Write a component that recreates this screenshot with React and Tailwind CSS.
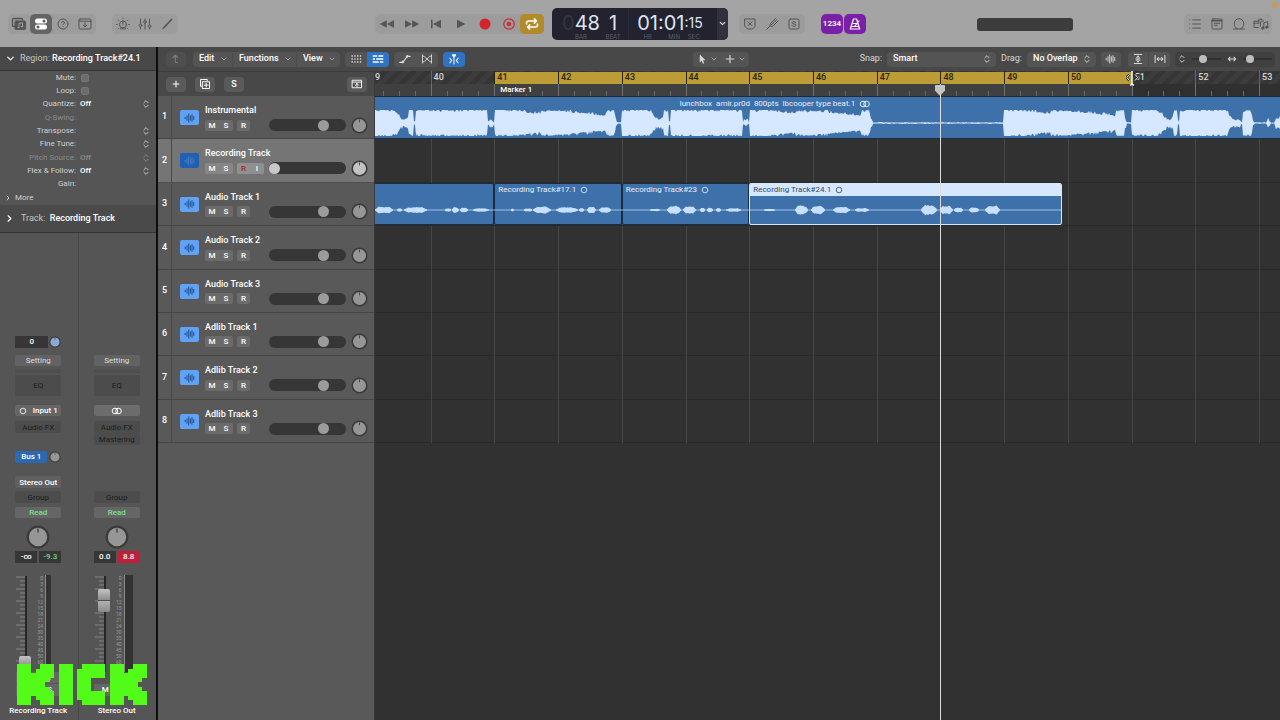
import React, { useState } from 'react';
import clsx from 'clsx';
import {
  ChevronDown,
  ChevronRight,
  ChevronsUpDown,
  CircleHelp,
  List,
  Plus,
} from 'lucide-react';

// Visible part of the arrangement, in bars
const VIEW_START = 39.128;
const VIEW_BARS = 14.2;
const VIEW_UNITS = 905;

const pct = (bar) => `${((bar - VIEW_START) / VIEW_BARS) * 100}%`;
const span = (bars) => `${(bars / VIEW_BARS) * 100}%`;

const TRACKS = [
  { name: 'Instrumental', volume: 74 },
  { name: 'Recording Track', volume: 0, selected: true },
  { name: 'Audio Track 1', volume: 74 },
  { name: 'Audio Track 2', volume: 74 },
  { name: 'Audio Track 3', volume: 74 },
  { name: 'Adlib Track 1', volume: 74 },
  { name: 'Adlib Track 2', volume: 74 },
  { name: 'Adlib Track 3', volume: 74 },
];

const BARS = [40, 41, 42, 43, 44, 45, 46, 47, 48, 49, 50, 51, 52, 53];

// [offset, level] pairs, one unit per pixel of a 905 wide view
const LOOP_A = [
  [0, 1], [26, 1], [30, 0.8], [34, 0.35], [37, 0.25], [40, 0.4], [41, 0.45], [42, 1], [46, 1],
  [46.5, 0.15], [48, 0.15], [48.5, 1], [120, 1], [121, 0.12], [124, 0.28], [127, 0.04], [127.4, 0.04],
];
const LOOP_B = [
  [0, 1], [20, 1], [32, 0.85], [46, 0.75], [47, 0.98], [60, 0.97], [74, 0.88], [88, 0.78], [100, 0.66], [111, 0.58],
  [112, 0.98], [120, 0.98], [121, 0.4], [123, 0.04], [127.4, 0.04],
];
const LOOP_END = [
  [0, 1], [24, 1], [30, 0.7], [34, 0.35], [38, 0.25], [41, 0.45], [42, 0.98], [45, 0.98], [46, 0.1],
  [47.5, 0.1], [48, 1], [95, 1], [98, 0.4], [103, 0.25], [107, 0.3], [110, 0.04], [111, 0.98],
  [119, 0.98], [121, 0.2], [123, 0.04], [134, 0.04], [136, 0.4], [138, 0.06], [142, 0.06], [144, 0.35], [149, 0.45],
];
const shift = (points, by) => points.map(([x, a]) => [x + by, a]);
const BEAT = [
  ...shift(LOOP_A, -8),
  ...shift(LOOP_B, 119.5),
  ...shift(LOOP_A, 247),
  ...shift(LOOP_B, 374.5),
  [503, 0.03], [628, 0.03],
  ...shift(LOOP_B, 629),
  ...shift(LOOP_END, 757),
];

// [start, end, half height]
const VOICE = [
  [0, 18, 3], [22, 27, 1.3], [29, 52, 2.6], [70, 76, 1.2], [77, 84, 2.4], [85, 93, 2], [98, 114, 1.3],
  [136, 139, 1], [149, 157, 1.2], [158, 176, 3], [181, 203, 2.4], [204, 209, 1.6], [212, 221, 2.8], [224, 236, 2.5],
  [275, 285, 0.7], [292, 306, 4], [308, 321, 3.4], [325, 330, 1.8], [332, 338, 1.8], [341, 346, 1.4], [351, 366, 1.3],
  [389, 400, 0.7], [420, 433, 4.2], [436, 450, 3.8], [458, 475, 2.8], [480, 494, 1.5],
  [546, 562, 4.8], [565, 578, 4], [579, 588, 2], [594, 604, 2.2], [610, 625, 4.2],
];

const noise = (n) => {
  const v = Math.sin(n * 127.1) * 43758.5453;
  return v - Math.floor(v);
};

const levelAt = (x) => {
  for (let i = 1; i < BEAT.length; i++) {
    const [x1, a1] = BEAT[i];
    const [x0, a0] = BEAT[i - 1];
    if (x <= x1) return x1 === x0 ? a1 : a0 + ((a1 - a0) * (x - x0)) / (x1 - x0);
  }
  return 0.4;
};

// Loud parts are clipped flat with notches, softer ones get peaks on top
const heightAt = (x, seed) => {
  const level = levelAt(x);
  const n = noise(x + seed);
  if (level < 0.05) return 0.4 + (n > 0.75 ? 0.7 : 0);
  if (level > 0.96) return level * 13 - (n > 0.6 ? (n - 0.6) * 5 : 0);
  return Math.min(13, level * 13 + (n > 0.8 ? 1.8 : 0) - (n < 0.3 ? 0.8 : 0));
};

const beatPath = () => {
  const top = [];
  const bottom = [];
  for (let x = 0; x <= VIEW_UNITS; x++) {
    top.push(`${x},${(13 - heightAt(x, 0)).toFixed(1)}`);
    bottom.unshift(`${x},${(13 + heightAt(x, 999)).toFixed(1)}`);
  }
  return `M${top.join('L')}L${bottom.join('L')}Z`;
};

const voicePath = () =>
  VOICE.map(([from, to, h]) => {
    const top = [];
    const bottom = [];
    for (let x = from; x <= to; x++) {
      const t = (x - from) / (to - from);
      const a = 0.5 + h * Math.min(1, Math.sin(Math.PI * t) * 1.6) * (0.65 + noise(x) * 0.35);
      top.push(`${x},${(6 - a).toFixed(1)}`);
      bottom.unshift(`${x},${(6 + a).toFixed(1)}`);
    }
    return `M${top.join('L')}L${bottom.join('L')}Z`;
  }).join('');

/* ---------- icons ---------- */

const Icon = ({ children, className = 'w-4 h-4', box = 16 }) => (
  <svg
    viewBox={`0 0 ${box} ${box}`}
    className={clsx('shrink-0', className)}
    fill="none"
    stroke="currentColor"
    strokeWidth="1"
    strokeLinecap="round"
    strokeLinejoin="round"
    aria-hidden="true"
  >
    {children}
  </svg>
);

const LibraryIcon = () => (
  <Icon>
    <path d="M3.5 10.5h-1a1 1 0 0 1-1-1v-6a1 1 0 0 1 1-1h8a1 1 0 0 1 1 1v.5" strokeWidth="1.300" />
    <rect x="4" y="5" width="10.500" height="8.500" rx="1" fill="currentColor" />
    <path d="M8 11.500V7.500l3.500-.8v4" stroke="#a0a0a0" />
    <circle cx="7.300" cy="11.500" r=".8" fill="#a0a0a0" stroke="none" />
    <circle cx="10.800" cy="10.800" r=".8" fill="#a0a0a0" stroke="none" />
  </Icon>
);

const TogglesIcon = () => (
  <Icon>
    <rect x="2" y="2.500" width="12" height="5" rx="2.500" fill="currentColor" stroke="none" />
    <rect x="2" y="8.500" width="12" height="5" rx="2.500" fill="currentColor" stroke="none" />
    <circle cx="11" cy="5" r="1.500" fill="#5c5c5c" stroke="none" />
    <circle cx="5" cy="11" r="1.500" fill="#5c5c5c" stroke="none" />
  </Icon>
);

const TrayIcon = () => (
  <Icon>
    <rect x="2" y="3" width="12" height="10" rx="1" />
    <path d="M2 5.200h12M8 6.800v4M6.300 9.300 8 11l1.700-1.700" />
  </Icon>
);

const SmartIcon = () => (
  <Icon>
    <circle cx="8" cy="8.500" r="3.500" />
    <path d="M8 8.500V5M3 13l.6-.6M13 13l-.6-.6M1.500 8.500h.8M13.700 8.500h.8M3.300 4l.6.6M12.700 4l-.6.6M8 2v.5M5.500 12.800h5" />
  </Icon>
);

const MixerIcon = () => (
  <Icon>
    <path d="M3.500 3v4.500M3.500 11v2M8 3v1.500M8 7.500V13M12.500 3v5.500M12.500 12v1" />
    <circle cx="3.500" cy="9.300" r="1.300" />
    <circle cx="8" cy="6" r="1.300" />
    <circle cx="12.500" cy="10.300" r="1.300" />
  </Icon>
);

const PencilIcon = () => (
  <Icon>
    <path d="m5 11.500 7.500-8" strokeWidth="1.800" />
    <path d="m3.500 13 1.500-1.500" />
  </Icon>
);

const RewindIcon = () => (
  <Icon>
    <path d="M7.800 4.200v7.600L.8 8zM15 4.200v7.600L8 8z" fill="currentColor" stroke="none" />
  </Icon>
);
const ForwardIcon = () => (
  <Icon>
    <path d="M1 4.200v7.600L8 8zM8.200 4.200v7.600l7-3.800z" fill="currentColor" stroke="none" />
  </Icon>
);
const StartIcon = () => (
  <Icon>
    <path d="M3 3.800h1.600v8.400H3zM13 3.800v8.400L5 8z" fill="currentColor" stroke="none" />
  </Icon>
);
const PlayIcon = () => (
  <Icon>
    <path d="M4 3.800v8.400L12.500 8z" fill="currentColor" stroke="none" />
  </Icon>
);
const RecordIcon = () => (
  <Icon>
    <circle cx="8" cy="8" r="5.500" fill="#d3242c" stroke="none" />
  </Icon>
);
const CaptureIcon = () => (
  <Icon>
    <circle cx="8" cy="8" r="5.200" stroke="#c5303a" strokeWidth="1.300" strokeDasharray="6 1" />
    <circle cx="8" cy="8" r="2.300" fill="#c5303a" stroke="none" />
  </Icon>
);
const CycleIcon = () => (
  <Icon>
    <path d="M2.500 8V7a2 2 0 0 1 2-2H12M10.300 2.800 12.500 5l-2.200 2.200M13.500 8v1a2 2 0 0 1-2 2H4M5.700 8.800 3.500 11l2.200 2.200" strokeWidth="1.600" />
  </Icon>
);

const ReplaceIcon = () => (
  <Icon>
    <path d="M3 3h10v7.500l-2.500 2.500h-5L3 10.500zM6 5.800l4 4M10 5.800l-4 4" />
  </Icon>
);
const ForkIcon = () => (
  <Icon>
    <path d="m2.500 13.500 4-4M11.500 2.500 7 7c-.8.800-1.500 2-.5 3s2.200.3 3-.5l4.500-4.500M6.500 9.500 12.800 3.700" />
  </Icon>
);
const SoloIcon = () => (
  <Icon>
    <rect x="3" y="3" width="10" height="10" rx="1.500" />
    <path d="M9.800 6.500c-.4-1-3.600-1.100-3.600.3s3.600.9 3.600 2.400-3.300 1.400-3.800.3" />
  </Icon>
);
const MetronomeIcon = () => (
  <Icon>
    <path d="M6.500 3h3l3.200 10H3.300zM4.300 10.500h7.400M8 10l4-5M6.500 7.500h3" strokeWidth="1.200" />
  </Icon>
);
const ListIcon = () => <List className="w-[14px] h-[14px] shrink-0" strokeWidth={1.7} />;
const NotesIcon = () => (
  <Icon>
    <rect x="3" y="3" width="10" height="10" rx="1" />
    <path d="M3 4.700h10" strokeWidth="1.500" />
    <path d="M5.500 7.300h5M5.500 9.300h3" />
  </Icon>
);
const LoopIcon = () => (
  <Icon>
    <path d="M2.500 13h11M6.500 12.800c-2-.7-3.300-2.600-3.300-5C3.200 4.800 5.300 2.700 8 2.700s4.800 2.100 4.800 5.100c0 2.400-1.300 4.300-3.300 5" />
  </Icon>
);
const MediaIcon = () => (
  <Icon>
    <path d="M9 4V3.200H5.800v2H1v6.300h4.500M1 7.200h5M7.500 10.500V6l1-1h2M10.800 12V6.700l4-1V11M5.800 5.200v2" />
    <circle cx="9.700" cy="12.200" r="1.100" fill="currentColor" />
    <circle cx="13.700" cy="11.200" r="1.100" fill="currentColor" />
  </Icon>
);

const WaveIcon = ({ className }) => (
  <Icon className={className}>
    <path d="M1.500 7v2M4 5v6M6.300 2.500v11M8.500 5v6M10.700 3.500v9M13 6v4" strokeWidth="1.300" />
  </Icon>
);

const GridIcon = () => (
  <Icon className="w-3 h-3">
    <path d="M2 4h13M2 8h13M2 12h13" strokeWidth="1.800" strokeDasharray="1.800 1.900" strokeLinecap="butt" />
  </Icon>
);
const RegionsIcon = () => (
  <Icon className="w-3 h-3">
    <path d="M1 4h6M8.500 4H15M1 8h3M5.500 8H15M1 12h8M10.500 12H15" strokeWidth="2" strokeLinecap="butt" />
  </Icon>
);
const CurveIcon = () => (
  <Icon className="w-3 h-3">
    <path d="M1 12.500h4l6-8h4" strokeWidth="1.400" />
    <circle cx="5" cy="12" r="1.300" fill="currentColor" />
    <circle cx="11" cy="4.500" r="1.300" fill="currentColor" />
  </Icon>
);
const FlexIcon = () => (
  <Icon className="w-3 h-3">
    <path d="M2 2.500v11M14 2.500v11M2 3.500c5 1 7 8 12 9M2 12.500c5-1 7-8 12-9" strokeWidth="1.200" />
  </Icon>
);
const CatchIcon = () => (
  <Icon className="w-3 h-3">
    <path d="M8 4v10.500" strokeWidth="1.300" />
    <path d="M5.500 1.500h5V4L8 6 5.500 4z" fill="currentColor" stroke="none" />
    <path d="m2.500 7 2.500 3-2.500 3M13.500 7 11 10l2.500 3" strokeWidth="1.400" />
  </Icon>
);
const PointerIcon = () => (
  <Icon className="w-3 h-3">
    <path d="M5 2v10.500l2.500-2.200 1.700 4 1.800-.8-1.700-3.800h3.400z" fill="currentColor" stroke="none" />
  </Icon>
);
const CrossIcon = () => (
  <Icon className="w-3 h-3">
    <path d="M8 3v3.500M8 9.500V13M3 8h3.500M9.500 8H13M7 8h2" strokeWidth="1.600" />
  </Icon>
);
const VZoomIcon = () => (
  <Icon className="w-3 h-3">
    <path d="M3 2h10M3 14h10M8 4v8M6 6l2-2 2 2M6 10l2 2 2-2M5 8h6" strokeWidth="1.300" />
  </Icon>
);
const HZoomIcon = () => (
  <Icon className="w-3 h-3">
    <path d="M1.500 3.500v9M14.500 3.500v9M4 8h8M6 6 4 8l2 2M10 6l2 2-2 2" strokeWidth="1.400" />
  </Icon>
);
const SidewaysIcon = () => (
  <Icon className="w-3 h-3">
    <path d="M3 8h10M5.500 5.500 3 8l2.500 2.500M10.500 5.500 13 8l-2.500 2.500" strokeWidth="1.400" />
  </Icon>
);
const StereoIcon = ({ className = 'w-3 h-2' }) => (
  <svg viewBox="0 0 12 8" className={clsx('shrink-0', className)} fill="none" stroke="currentColor" aria-hidden="true">
    <circle cx="4" cy="4" r="2.800" />
    <circle cx="7.500" cy="4" r="2.800" />
  </svg>
);
const MonoIcon = () => (
  <svg viewBox="0 0 8 8" className="w-2 h-2 shrink-0" fill="none" stroke="currentColor" strokeWidth=".8" aria-hidden="true">
    <circle cx="4" cy="4" r="2.800" />
  </svg>
);

/* ---------- shared pieces ---------- */

const BarButton = ({ label, className = 'w-[22px]', children }) => (
  <button aria-label={label} className={clsx('h-5 rounded-[5px] grid place-items-center', className)}>
    {children}
  </button>
);

const ToolButton = ({ label, className, children }) => (
  <button aria-label={label} className={clsx('h-[15px] grid place-items-center', className)}>
    {children}
  </button>
);

const Knob = ({ size = 'w-[17px] h-[17px]', face = '#969696', ring = '#3a3a3a' }) => (
  <svg viewBox="0 0 24 24" className={clsx('shrink-0', size)} aria-hidden="true">
    <circle cx="12" cy="12" r="10.300" fill={face} stroke={ring} strokeWidth="2.200" />
    <path d="M12 3.500v4" stroke="#444" strokeWidth="1.500" />
  </svg>
);

/* ---------- control bar ---------- */

const Readout = ({ label, small, className, children }) => (
  <div className={clsx('flex flex-col items-center', className)}>
    <span className={clsx('pt-[3px] h-[26px] leading-[24px]', small ? 'text-sm' : 'text-xl')}>{children}</span>
    <span className="text-[6px] leading-[6px] text-[#5c5e6b]">{label}</span>
  </div>
);

const ControlBar = () => (
  <header className="relative h-[47px] bg-[#a4a4a4] grid grid-cols-[1fr_auto_1fr] items-center gap-2 text-[#555]">
    <div className="flex items-center justify-between pl-2">
      <div className="flex items-center gap-4">
        <div className="flex rounded-[5px] bg-[#9c9c9c]">
          <BarButton label="Library"><LibraryIcon /></BarButton>
          <BarButton label="Inspector" className="w-[22px] bg-[#646464] text-white"><TogglesIcon /></BarButton>
          <BarButton label="Quick Help">
            <CircleHelp className="w-3 h-3" strokeWidth={2} />
          </BarButton>
          <BarButton label="Toolbar"><TrayIcon /></BarButton>
        </div>
        <div className="flex rounded-[5px] bg-[#9c9c9c]">
          <BarButton label="Smart Controls"><SmartIcon /></BarButton>
          <BarButton label="Mixer"><MixerIcon /></BarButton>
          <BarButton label="Editors"><PencilIcon /></BarButton>
        </div>
      </div>
      <div className="flex rounded-[5px] bg-[#9c9c9c]">
        <BarButton label="Rewind" className="w-[24px]"><RewindIcon /></BarButton>
        <BarButton label="Forward" className="w-[25px]"><ForwardIcon /></BarButton>
        <BarButton label="Go to Beginning" className="w-6"><StartIcon /></BarButton>
        <BarButton label="Play" className="w-[25px]"><PlayIcon /></BarButton>
        <BarButton label="Record" className="w-6"><RecordIcon /></BarButton>
        <BarButton label="Capture Recording" className="w-[23px]"><CaptureIcon /></BarButton>
        <BarButton label="Cycle" className="w-6 bg-[#b28a27] text-white"><CycleIcon /></BarButton>
      </div>
    </div>

    <div className="flex h-8 rounded-[5px] bg-[#22232f] font-['Inter',sans-serif] text-[#dfe4f2] text-center overflow-hidden">
      <div className="w-[77px] flex border-r border-[#2b2c39] pl-[11px] gap-2">
        <Readout label="BAR" className="w-9">
          <span className="text-[#34353f]">0</span>48
        </Readout>
        <Readout label="BEAT" className="w-3">1</Readout>
      </div>
      <div className="w-[88px] flex justify-center pr-1.5">
        <Readout label="HR">01</Readout>
        <span className="text-xl leading-[28px]">:</span>
        <Readout label="MIN">01</Readout>
        <Readout label="SEC" small>:15</Readout>
      </div>
      <button aria-label="Display Mode" className="w-[11px] bg-[#30313d] grid place-items-center">
        <ChevronDown className="w-[9px] h-[9px]" strokeWidth={3} />
      </button>
    </div>

    <div className="flex items-center justify-between pl-[3px] pr-2">
      <div className="flex gap-4">
        <div className="flex rounded-[5px] bg-[#9c9c9c]">
          <BarButton label="Replace"><ReplaceIcon /></BarButton>
          <BarButton label="Tuner"><ForkIcon /></BarButton>
          <BarButton label="Solo"><SoloIcon /></BarButton>
        </div>
        <div className="flex gap-px text-white">
          <BarButton label="Count In" className="w-[22px] bg-[#7a20a8]">
            <span className="text-[8px] font-semibold">1234</span>
          </BarButton>
          <BarButton label="Metronome" className="w-[22px] bg-[#7a20a8]"><MetronomeIcon /></BarButton>
        </div>
      </div>
      <div className="w-24 h-[13px] mt-0.5 rounded-[3px] bg-[#3c3c3c]" />
      <div className="flex rounded-[5px] bg-[#9c9c9c]">
        <BarButton label="List Editors"><ListIcon /></BarButton>
        <BarButton label="Note Pads"><NotesIcon /></BarButton>
        <BarButton label="Loop Browser"><LoopIcon /></BarButton>
        <BarButton label="Media Browser"><MediaIcon /></BarButton>
      </div>
    </div>
    <span className="absolute right-0.5 top-0.5 w-1.5 h-1.5 rounded-full bg-[#c99a5c]" />
  </header>
);

/* ---------- inspector ---------- */

const FIELDS = [
  { label: 'Mute', check: true },
  { label: 'Loop', check: true },
  { label: 'Quantize', value: 'Off' },
  { label: 'Q-Swing', disabled: true, bare: true },
  { label: 'Transpose', value: '' },
  { label: 'Fine Tune', value: '' },
  { label: 'Pitch Source', value: 'Off', disabled: true },
  { label: 'Flex & Follow', value: 'Off' },
  { label: 'Gain', bare: true },
];

const RegionField = ({ field }) => {
  const id = `region-${field.label.replace(/\W+/g, '-').toLowerCase()}`;
  return (
    <div className={clsx('flex items-center text-[8px] leading-3', field.disabled ? 'text-[#8a8a8a]' : 'text-[#cfcfcf]')}>
      <label htmlFor={id} className="w-[76px] text-right">{field.label}:</label>
      {field.check && (
        <input id={id} type="checkbox" className="ml-[5px] w-2 h-2 appearance-none rounded-xs bg-[#6c6c6c] border border-[#757575]" />
      )}
      {field.bare && <input id={id} className="ml-1 w-16 h-3 bg-transparent" disabled={field.disabled} />}
      {!field.check && !field.bare && (
        <>
          <select
            id={id}
            disabled={field.disabled}
            className={clsx('ml-1 flex-1 appearance-none bg-transparent font-medium', !field.disabled && 'text-white')}
          >
            <option>{field.value}</option>
          </select>
          <ChevronsUpDown className="w-[10px] h-[10px] mr-[5px]" strokeWidth={2.2} />
        </>
      )}
    </div>
  );
};

const Slot = ({ className, children }) => (
  <button className={clsx('block w-[46px] mx-auto rounded-xs text-[8px] leading-[11px]', className)}>{children}</button>
);

const SCALE = ['0', '3', '6', '9', '12', '15', '18', '21', '24', '30', '35', '40', '45', '50', '60'];

const Fader = ({ name, value, wide }) => (
  <div className="flex pl-[15px] gap-[3px] h-[97px] overflow-hidden">
    <div className="grid">
      <svg className="col-start-1 row-start-1 w-4 h-[97px]" viewBox="0 0 16 97" aria-hidden="true">
        <path d="M11 1v96" stroke="#262626" strokeWidth="2" />
        {Array.from({ length: 25 }, (_, i) => (
          <path key={i} d={`M${i % 3 ? 5 : 1} ${2 + i * 4}H10`} stroke="#9c9c9c" strokeWidth=".7" />
        ))}
      </svg>
      <input
        type="range"
        aria-label={`${name} volume`}
        defaultValue={value}
        className="col-start-1 row-start-1 justify-self-end w-3 h-[104px] appearance-none bg-transparent [writing-mode:vertical-lr] [direction:rtl] [&::-webkit-slider-thumb]:appearance-none [&::-webkit-slider-thumb]:w-3 [&::-webkit-slider-thumb]:h-[23px] [&::-webkit-slider-thumb]:rounded-xs [&::-webkit-slider-thumb]:bg-[linear-gradient(#c4c4c4,#8e8e8e_46%,#505050_48%,#505050_52%,#b0b0b0_54%,#8a8a8a)]"
      />
    </div>
    <div className="flex">
      <div className="w-[9px] text-[5px] leading-[6px] text-right text-[#9a9a9a]">
        {SCALE.map((n) => <div key={n}>{n}</div>)}
      </div>
      <div className={clsx('ml-0.5 h-[97px] bg-[#333] border-l border-[#8a8a8a]', wide ? 'w-[9px]' : 'w-[6px]')} />
    </div>
  </div>
);

const ChannelStrip = ({ strip }) => (
  <div className="flex-1 min-w-0 grid content-end grid-rows-[19px_14px_36px_16px_30px_25px_15px_16px_18px_26px_24px_97px_12px_19px_16px] pr-px pb-px">
    <div>
      {strip.input && (
        <div className="w-[46px] mx-auto flex items-center gap-[1px]">
          <span className="w-[33px] h-3 bg-[#363636] text-white font-medium text-[8px] leading-3 text-center">0</span>
          <Knob size="w-3 h-3" face="#8fa8d0" />
        </div>
      )}
    </div>
    <Slot className="h-[11px] bg-[#626262] text-[#dedede]">Setting</Slot>
    <div>
      <div className="w-[46px] mx-auto h-1 bg-[#4f4f4f]" />
      <Slot className="h-[21px] mt-0.5 bg-[#4c4c4c] text-[#1c1c1c]">EQ</Slot>
    </div>
    {strip.input ? (
      <Slot className="h-[11px] bg-[#666] text-white font-medium">
        <span className="flex items-center justify-center gap-1.5"><MonoIcon />{strip.input}</span>
      </Slot>
    ) : (
      <Slot className="h-[11px] bg-[#6c6c6c] text-white">
        <StereoIcon className="w-3 h-2 mx-auto" />
      </Slot>
    )}
    <div>
      <Slot className="h-3 bg-[#4c4c4c] text-[#1c1c1c]">Audio FX</Slot>
      {strip.fx && <Slot className="h-3 bg-[#4c4c4c] text-[#1c1c1c]">{strip.fx}</Slot>}
    </div>
    <div>
      {strip.bus && (
        <div className="w-[46px] mx-auto flex items-center gap-0.5">
          <button className="w-8 h-3 rounded-xs bg-[#2c69b4] text-white font-medium text-[8px] leading-3">{strip.bus}</button>
          <Knob size="w-3 h-3" />
        </div>
      )}
    </div>
    {strip.output ? (
      <Slot className="h-3 bg-[#606060] text-white font-medium whitespace-nowrap">{strip.output}</Slot>
    ) : <div />}
    <Slot className="h-3 bg-[#4c4c4c] text-[#1c1c1c]">Group</Slot>
    <Slot className="h-[11px] bg-[#666] text-[#7be08f] font-medium">Read</Slot>
    <Knob size="w-6 h-6 mx-auto" />
    <div className="flex justify-center gap-0.5 text-[8px] leading-3 font-medium text-center">
      <output className="w-[22px] h-3 bg-[#363636] text-white">{strip.volume}</output>
      <output className={clsx('w-[22px] h-3', strip.clip ? 'bg-[#c01f3a] text-white' : 'bg-[#363636] text-[#6fd88a]')}>{strip.peak}</output>
    </div>
    <Fader name={strip.name} value={strip.fader} wide={strip.clip} />
    <div className="flex justify-center gap-px text-[8px] leading-[11px] text-white">
      {strip.input && (
        <>
          <button className="w-[22px] h-[11px] bg-[#666]">R</button>
          <button className="w-[22px] h-[11px] bg-[#666]">I</button>
        </>
      )}
    </div>
    <div className="flex justify-center gap-px text-[8px] leading-3 text-white">
      <button className="w-[22px] h-3 bg-[#666] font-medium">M</button>
      {strip.input ? <button className="w-[22px] h-3 bg-[#666] font-medium">S</button> : <span className="w-[22px]" />}
    </div>
    <div className="text-[8px] leading-4 font-medium text-white text-center whitespace-nowrap">{strip.name}</div>
  </div>
);

const STRIPS = [
  { name: 'Recording Track', input: 'Input 1', bus: 'Bus 1', output: 'Stereo Out', volume: '-∞', peak: '-9.3', fader: 0 },
  { name: 'Stereo Out', fx: 'Mastering', volume: '0.0', peak: '8.8', clip: true, fader: 83 },
];

const Inspector = () => (
  <aside className="w-[158px] shrink-0 bg-[#555] border-r-2 border-[#0d0d0d] flex flex-col">
    <h2 className="h-6 bg-[#484848] border-b border-[#333] flex items-center gap-1 pl-[5px] text-[9px] text-[#c4c4c4]">
      <ChevronDown className="w-[11px] h-[11px] text-white" strokeWidth={2.5} />
      <span>Region: <span className="text-white font-medium">Recording Track#24.1</span></span>
    </h2>
    <div className="grid grid-rows-9 h-[120px]">
      {FIELDS.map((field) => <RegionField key={field.label} field={field} />)}
    </div>
    <button className="h-[14px] flex items-center gap-[3px] pl-1 text-[8px] text-[#cfcfcf]">
      <ChevronRight className="w-2 h-2" strokeWidth={3} />
      More
    </button>
    <h2 className="h-7 bg-[#4a4a4a] border-b border-[#333] flex items-center gap-1.5 pl-1 text-[9px] text-[#c4c4c4]">
      <ChevronRight className="w-[11px] h-[11px] text-white" strokeWidth={2.5} />
      <span>Track:&nbsp; <span className="text-white font-medium">Recording Track</span></span>
    </h2>
    <div className="flex-1 flex divide-x divide-[#484848]">
      {STRIPS.map((strip) => <ChannelStrip key={strip.name} strip={strip} />)}
    </div>
  </aside>
);

/* ---------- tracks area ---------- */

const Menu = ({ children, className }) => (
  <button className={clsx('h-[15px] flex items-center justify-between pl-1.5 pr-1 text-[9px] font-medium text-white', className)}>
    {children}
    <ChevronDown className="w-2 h-2 text-[#a0a0a0]" strokeWidth={3} />
  </button>
);

const ZoomSlider = ({ label, value }) => (
  <input
    type="range"
    aria-label={label}
    defaultValue={value}
    className="w-[29px] h-2 appearance-none bg-[linear-gradient(#303030,#303030)] bg-[length:100%_2px] bg-center bg-no-repeat [&::-webkit-slider-thumb]:appearance-none [&::-webkit-slider-thumb]:w-2 [&::-webkit-slider-thumb]:h-2 [&::-webkit-slider-thumb]:rounded-full [&::-webkit-slider-thumb]:bg-[#bdbdbd]"
  />
);

const TracksToolbar = () => (
  <div className="h-6 bg-[#484848] grid grid-cols-[1fr_auto_1fr] items-center pl-2 pr-[5px] text-[#d8d8d8]">
    <div className="flex items-center gap-[5px]">
      <ToolButton label="Up" className="w-5 mr-0.5 rounded-sm bg-[#4f4f4f] text-[#7d7d7d]">
        <Icon className="w-3 h-3"><path d="M4 6l3-3 3 3M7 3v8c0 1.500 1 2 3 2" strokeWidth="1.500" /></Icon>
      </ToolButton>
      <div className="flex rounded-sm bg-[#545454] divide-x divide-[#4b4b4b]">
        <Menu className="w-10">Edit</Menu>
        <Menu className="w-16">Functions</Menu>
        <Menu className="w-[43px]">View</Menu>
      </div>
      <div className="flex rounded-sm bg-[#545454] overflow-hidden">
        <ToolButton label="Live Loops" className="w-[22px]"><GridIcon /></ToolButton>
        <ToolButton label="Tracks View" className="w-[22px] bg-[#2f74c4] text-white"><RegionsIcon /></ToolButton>
      </div>
      <div className="flex rounded-sm bg-[#545454]">
        <ToolButton label="Automation" className="w-[22px]"><CurveIcon /></ToolButton>
        <ToolButton label="Flex" className="w-[22px]"><FlexIcon /></ToolButton>
      </div>
      <ToolButton label="Catch" className="w-[22px] rounded-sm bg-[#2f74c4] text-white"><CatchIcon /></ToolButton>
    </div>

    <div className="flex rounded-sm bg-[#545454]">
      <button aria-label="Left-click Tool" className="w-7 h-[15px] flex items-center justify-center gap-0.5">
        <PointerIcon />
        <ChevronDown className="w-2 h-2 text-[#a0a0a0]" strokeWidth={3} />
      </button>
      <button aria-label="Command-click Tool" className="w-7 h-[15px] flex items-center justify-center gap-0.5">
        <CrossIcon />
        <ChevronDown className="w-2 h-2 text-[#a0a0a0]" strokeWidth={3} />
      </button>
    </div>

    <div className="flex items-center justify-end gap-[5px] text-[9px]">
      <label htmlFor="snap">Snap:</label>
      <div className="flex items-center w-[109px] rounded-sm bg-[#545454] pr-1">
        <select id="snap" className="h-[15px] flex-1 appearance-none bg-transparent pl-1.5 font-medium text-white">
          <option>Smart</option>
        </select>
        <ChevronsUpDown className="w-[10px] h-[10px]" strokeWidth={2.2} />
      </div>
      <label htmlFor="drag">Drag:</label>
      <div className="flex items-center w-[69px] rounded-sm bg-[#545454] pr-1">
        <select id="drag" className="h-[15px] min-w-0 flex-1 appearance-none bg-transparent pl-1.5 font-medium text-white">
          <option>No Overlap</option>
        </select>
        <ChevronsUpDown className="w-[10px] h-[10px]" strokeWidth={2.2} />
      </div>
      <ToolButton label="Waveform Zoom" className="w-5 rounded-sm bg-[#545454]"><WaveIcon className="w-3 h-3" /></ToolButton>
      <div className="flex ml-0.5 rounded-sm bg-[#545454] divide-x divide-[#4a4a4a]">
        <ToolButton label="Zoom Vertically" className="w-[21px]"><VZoomIcon /></ToolButton>
        <ToolButton label="Zoom Horizontally" className="w-[21px]"><HZoomIcon /></ToolButton>
      </div>
      <div className="h-[15px] flex items-center gap-[5px] rounded-sm bg-[#404040] pl-0.5 pr-[3px]">
        <ChevronsUpDown className="w-[10px] h-[10px]" strokeWidth={2.2} />
        <ZoomSlider label="Vertical Zoom" value={34} />
        <SidewaysIcon />
        <ZoomSlider label="Horizontal Zoom" value={14} />
      </div>
    </div>
  </div>
);

const TrackHeader = ({ track, index }) => (
  <li className={clsx('flex border-b text-white', track.selected ? 'bg-[#757575] border-[#505050]' : 'bg-[#595959] border-[#464646]')}>
    <span className="w-[14px] border-r border-[#4a4a4a] grid place-items-center text-[9px] font-medium">{index + 1}</span>
    <span
      className={clsx(
        'ml-2 mt-[14px] w-[19px] h-[15px] rounded-xs grid place-items-center shrink-0',
        track.selected ? 'bg-[#1f5fb4] text-[#4a7db8]' : 'bg-[#62a2f5] text-[#1d4b8c]'
      )}
    >
      <WaveIcon className="w-3 h-3" />
    </span>
    <div className="ml-1.5 flex-1 pt-2">
      <div className="text-[9px] leading-3 font-medium">{track.name}</div>
      <div className="flex items-center pt-[3px]">
        <div className="w-[64px] flex gap-1 text-[8px] leading-[11px] font-medium">
          <div className={clsx('flex rounded-xs', track.selected ? 'bg-[#868686]' : 'bg-[#6b6b6b]')}>
            <button className="w-[14px]" aria-label={`Mute ${track.name}`}>M</button>
            <button className="w-[14px]" aria-label={`Solo ${track.name}`}>S</button>
          </div>
          <div className={clsx('flex rounded-xs', track.selected ? 'bg-[#909090]' : 'bg-[#6b6b6b]')}>
            <button className={clsx('w-[13px]', track.selected && 'text-[#b3202c]')} aria-label={`Record ${track.name}`}>R</button>
            {track.selected && <button className="w-[14px]" aria-label={`Monitor ${track.name}`}>I</button>}
          </div>
        </div>
        <input
          type="range"
          aria-label={`${track.name} volume`}
          defaultValue={track.volume}
          className={clsx(
            'w-[77px] h-3 appearance-none rounded-full bg-[#363636] [&::-webkit-slider-thumb]:appearance-none [&::-webkit-slider-thumb]:w-[11px] [&::-webkit-slider-thumb]:h-[11px] [&::-webkit-slider-thumb]:rounded-full',
            track.selected ? '[&::-webkit-slider-thumb]:bg-[#c8c8c8]' : '[&::-webkit-slider-thumb]:bg-[#9b9b9b]'
          )}
        />
        <span className="ml-[5px] -my-1"><Knob face={track.selected ? '#c2c2c2' : '#969696'} /></span>
      </div>
    </div>
  </li>
);

const Ruler = () => (
  <div className="relative h-[25px] overflow-hidden bg-[#404040] text-[9px] leading-[13px] font-medium text-[#d6d6d6]">
    <div className="h-[13px] bg-[repeating-linear-gradient(135deg,#3c3c3c_0px,#3c3c3c_5px,#353535_5px,#353535_10px)]" />
    <div className="absolute top-px h-3 bg-[#bb9c35]" style={{ left: pct(41), width: span(10) }} />
    <div className="absolute top-[13px] bottom-0 right-0 bg-[#303030]" style={{ left: pct(51) }} />
    <span className="absolute left-0 top-0">9</span>
    {BARS.map((bar) => {
      const inCycle = bar > 40 && bar < 51;
      return (
        <React.Fragment key={bar}>
          <span
            className={clsx('absolute top-0 h-[13px] border-l pl-0.5', inCycle ? 'border-[#2b2410] text-[#2b2410]' : 'border-[#666]')}
            style={{ left: pct(bar) }}
          >
            {bar}
          </span>
          <span className="absolute top-[13px] bottom-0 w-px bg-[#707070]" style={{ left: pct(bar) }} />
        </React.Fragment>
      );
    })}
    {BARS.flatMap((bar) => [0.25, 0.5, 0.75].map((q) => (
      <span key={bar + q} className="absolute bottom-0 h-[5px] w-px bg-[#6a6a6a]" style={{ left: pct(bar + q - 1) }} />
    )))}
    <span className="absolute top-[13px] pl-1.5 text-[8px] leading-3 text-white" style={{ left: pct(41) }}>
      <span className="bg-[#404040]">Marker 1</span>
    </span>
  </div>
);

const REGIONS = [
  { start: 38, end: 41 },
  { name: 'Recording Track#17.1', start: 41, end: 43 },
  { name: 'Recording Track#23', start: 43, end: 45 },
  { name: 'Recording Track#24.1', start: 45, end: 49.9, selected: true },
];

const Lane = ({ index }) => {
  if (index === 0) {
    return (
      <div className="relative bg-[#3e71aa] border-y border-[#1c2c40] flex flex-col text-[#e4efff]">
        <div className="h-[13px] flex items-center gap-1 text-[8px] leading-3 whitespace-pre" style={{ paddingLeft: pct(43.91) }}>
          lunchbox  amir.pr0d  800pts  lbcooper type beat.1
          <StereoIcon />
        </div>
        <svg viewBox="0 0 905 26" preserveAspectRatio="none" className="block w-full h-[26px]" aria-hidden="true">
          <path d={beatPath()} fill="#d6e8ff" />
        </svg>
      </div>
    );
  }
  if (index === 2) {
    return (
      <div className="relative border-b border-[#292929]">
        {REGIONS.map((region) => (
          <div
            key={region.start}
            className={clsx(
              'absolute inset-y-0 overflow-hidden rounded-xs border bg-[#3e71aa] text-[8px] leading-3',
              region.selected ? 'border-[#d6e8ff]' : 'border-[#1c2c40]'
            )}
            style={{ left: pct(region.start), width: span(region.end - region.start) }}
          >
            {region.name && (
              <div className={clsx('h-3 flex items-center gap-1 pl-[3px]', region.selected ? 'bg-[#d6e8ff] text-[#2f4a6b]' : 'text-[#e4efff]')}>
                {region.name}
                <MonoIcon />
              </div>
            )}
          </div>
        ))}
        <svg viewBox="0 0 905 12" preserveAspectRatio="none" className="absolute left-0 top-[21px] w-full h-3" aria-hidden="true">
          <path d="M0 6H686" stroke="#b9d4f5" strokeWidth=".8" />
          <path d={voicePath()} fill="#c8e0ff" />
        </svg>
      </div>
    );
  }
  return <div className="border-b border-[#292929]" />;
};

const Timeline = () => (
  <div className="relative flex-1 min-w-0 bg-[#313131] flex flex-col overflow-hidden">
    <Ruler />
    <div className="relative h-[347px]">
      {BARS.map((bar) => (
        <span key={bar} className="absolute inset-y-0 w-px bg-[#464646]" style={{ left: pct(bar) }} />
      ))}
      <div className="grid grid-rows-8 h-full">
        {TRACKS.map((track, i) => <Lane key={track.name} index={i} />)}
      </div>
    </div>
    {/* Playhead */}
    <div className="absolute top-[13px] bottom-0 w-px bg-[#dcdcdc]" style={{ left: pct(48) }}>
      <svg viewBox="0 0 12 12" className="absolute -left-[6px] top-0 w-3 h-3" aria-hidden="true">
        <path d="M1 2a1 1 0 0 1 1-1h8a1 1 0 0 1 1 1v4.500L6.500 11.500h-1L1 6.500z" fill="#c4c4c4" />
      </svg>
    </div>
    {/* Cycle end handle under the mouse */}
    <svg viewBox="0 0 18 17" className="absolute -top-0.5 w-[18px] h-[17px] -ml-[6px]" style={{ left: pct(51) }} fill="none" aria-hidden="true">
      <path d="M4 1c1.500 0 2 .5 2 2v11c0 1.500-.5 2-2 2M8 1c-1.500 0-2 .5-2 2v11c0 1.500.5 2 2 2" stroke="#fff" strokeWidth="1.300" />
      <path d="M3.500 5.500.8 8.500l2.700 3M9 5.500l2.700 3-2.700 3" stroke="#222" strokeWidth="2.400" />
      <path d="M3.500 5.500.8 8.500l2.700 3M9 5.500l2.700 3-2.700 3" stroke="#fff" />
    </svg>
  </div>
);

const HeaderTools = () => (
  <div className="h-[25px] bg-[#484848] border-t border-[#3c3c3c] flex items-center gap-[9px] pl-2 pr-[7px] text-white">
    <ToolButton label="Add Track" className="w-5 rounded-sm bg-[#5a5a5a]"><Plus className="w-[10px] h-[10px]" strokeWidth={2.5} /></ToolButton>
    <ToolButton label="Duplicate Track" className="w-5 rounded-sm bg-[#5a5a5a]">
      <Icon className="w-3 h-3"><path d="M3.500 11H2V2h9v1.500M5 5h9v9H5zM9.500 7v5M7 9.500h5" strokeWidth="1.300" /></Icon>
    </ToolButton>
    <ToolButton label="Global Solo" className="w-5 rounded-sm bg-[#5a5a5a]"><span className="text-[9px] font-medium leading-3">S</span></ToolButton>
    <ToolButton label="Header Options" className="w-5 ml-auto rounded-sm bg-[#5a5a5a]">
      <Icon className="w-3 h-3"><path d="M2 3h12v10H2zM2 5.500h12M8 12V7.500M6 9.500l2-2 2 2" strokeWidth="1.200" /></Icon>
    </ToolButton>
  </div>
);

/* ---------- stream badge ---------- */

const BADGE = [
  'XXX..XXX.XXX..XXXXX.XXX..XXX',
  'XXX.XXXX.XXX.XXXXXX.XXX.XXXX',
  'XXXXXXXX.XXX.XXXXXX.XXXXXXXX',
  'XXXXXXX..XXX.XXX....XXXXXXX.',
  'XXXXXX...XXX.XXX....XXXXXX..',
  'XXXXXXX..XXX.XXX....XXXXXXX.',
  'XXXXXXXX.XXX.XXXXXX.XXXXXXXX',
  'XXX.XXXX.XXX.XXXXXX.XXX.XXXX',
  'XXX..XXX.XXX..XXXXX.XXX..XXX',
];

const KickBadge = () => (
  <svg
    viewBox="0 0 28 9"
    preserveAspectRatio="none"
    className="fixed left-[17px] bottom-[15px] w-[130px] h-[41px]"
    fill="#53fc18"
    shapeRendering="crispEdges"
    role="img"
    aria-label="Kick"
  >
    {BADGE.map((row, y) =>
      [...row.matchAll(/X+/g)].map((run) => (
        <rect key={`${y}-${run.index}`} x={run.index} y={y} width={run[0].length} height="1" />
      ))
    )}
  </svg>
);

const App = () => {
  const [tracks] = useState(TRACKS);

  return (
    <div className="min-h-screen flex flex-col bg-[#313131] font-['Roboto','Inter',sans-serif] select-none">
      <ControlBar />
      <div className="flex-1 flex">
        <Inspector />
        <main className="flex-1 min-w-0 flex flex-col">
          <TracksToolbar />
          <div className="flex-1 flex">
            <div className="w-[217px] shrink-0 bg-[#595959] border-r border-[#3a3a3a]">
              <HeaderTools />
              <ol className="grid grid-rows-8 h-[347px]">
                {tracks.map((track, i) => <TrackHeader key={track.name} track={track} index={i} />)}
              </ol>
            </div>
            <Timeline />
          </div>
        </main>
      </div>
      <KickBadge />
    </div>
  );
};

export default App;
